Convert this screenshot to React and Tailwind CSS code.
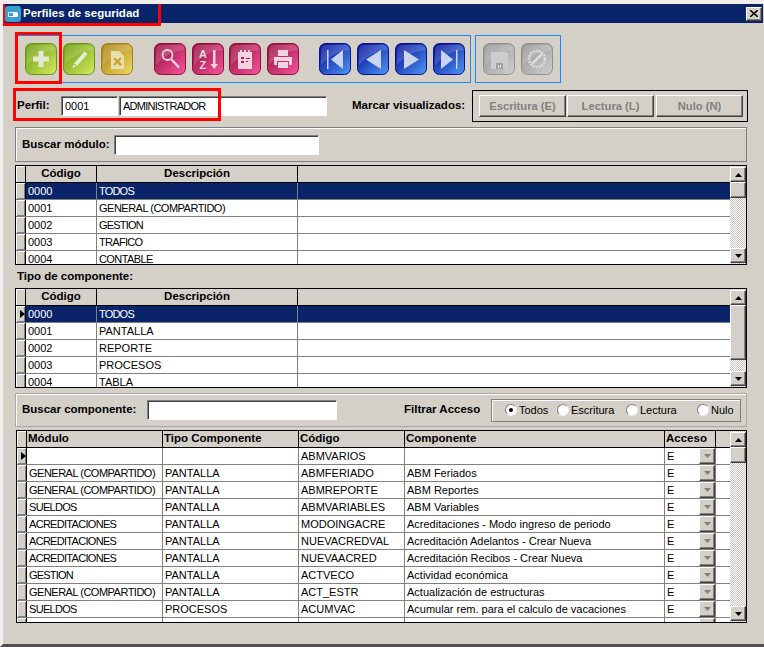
const PAL = {
  green: ['#6fa010', '#d6ec62', '#6c9418'],
  yellow: ['#ad8412', '#f0da66', '#a08020'],
  pink: ['#9c1242', '#f8569f', '#8c1038'],
  blue: ['#08149c', '#5098f6', '#08108c'],
  gray: ['#989898', '#d0d0d0', '#909090'],
};

const GLYPHS = {
  plus: <path d="M13.500 8h5v5.500H24v5h-5.500V24h-5v-5.500H8v-5h5.500z" fill="#e4e8d4" />,
  pencil: <g fill="#e4ecd4"><path d="M11 20.500 21.500 8.500l3 2.500L14 23z" /><path d="M10.500 21.500l2.500 2-4 1.500z" /></g>,
  file: <g><path d="M10 8h8l5 5v13H10z" fill="#e8dfb0" /><path d="M13.500 14.500l3 2.500 3-3 1 2-2.500 2.500 3 3-2 1.500-2.500-3-3 3-1-2 2.500-2.500-2.500-2z" fill="#c8a020" /></g>,
  search: <g fill="none" stroke="#f0d4de"><circle cx="13.500" cy="12" r="5" strokeWidth="1.800" /><path d="M17.500 16.500 25 24.500" strokeWidth="2.500" /></g>,
  sort: <g fill="#f0d4de"><path d="M21 7h2.500v14H26l-3.750 5-3.750-5H21z" /><text x="7" y="15" fontSize="11" fontWeight="700" fontFamily="Liberation Sans, sans-serif">A</text><text x="7.500" y="26" fontSize="11" fontWeight="700" fontFamily="Liberation Sans, sans-serif">Z</text></g>,
  note: <g><path d="M9 9h2V7h2v2h2V7h2v2h2V7h2v2h2v17H9z" fill="#f0d4de" /><path d="M12 14h3v2h-3zm0 4h3v2h-3zm5-3h4v1h-4zm0 3h2v1h-2z" fill="#c01850" /></g>,
  print: <g fill="#f0d4de"><path d="M11 7h10v6H11z" /><path d="M7 14h18v8h-3v-4H10v4H7z" /><path d="M11 19h10v6H11z" /></g>,
  first: <g fill="#c8d4f0"><path d="M8 7h1.500v19H8z" /><path d="M24 7v19L12 16.500z" /></g>,
  prev: <path d="M24 7v19L9 16.500z" fill="#c8d4f0" />,
  next: <path d="M9 7v19l15-9.500z" fill="#c8d4f0" />,
  last: <g fill="#c8d4f0"><path d="M23 7h1.500v19H23z" /><path d="M8 7v19l12-9.500z" /></g>,
  save: <g><path d="M8 9h15l2 2v15H8z" fill="#cccccc" /><path d="M13 20h7v6h-7z" fill="#a0a0a0" /><path d="M15 22h1v3h-1zm2 0h1v3h-1z" fill="#e0e0e0" /></g>,
  cancel: <g fill="none" stroke="#dcdcdc"><circle cx="16" cy="16" r="8" strokeWidth="2.500" strokeDasharray="2 1" /><path d="M11 21 21 11" strokeWidth="2.500" /></g>,
};

function Gloss({ color, glyph }) {
  const [a, b, c] = PAL[color];
  const id = `g-${glyph}`;
  return (
    <svg width="32" height="32" viewBox="0 0 32 32" className="block shrink-0">
      <defs>
        <linearGradient id={id} x1="0.1" y1="0.1" x2="1" y2="1">
          <stop offset="0" stopColor={a} />
          <stop offset="1" stopColor={b} />
        </linearGradient>
      </defs>
      <rect x="0.500" y="0.500" width="31" height="31" rx="6" fill={`url(#${id})`} stroke={c} />
      <path d="M2 7Q2 2 7 2h18q5 0 5 4v1Q14 8 2 22z" fill="#fff" opacity="0.16" />
      {GLYPHS[glyph]}
    </svg>
  );
}

const TRACK = {
  'GENERAL (COMPARTIDO)': 'tracking-[-0.5px]',
  ACREDITACIONES: 'tracking-[-0.7px]',
  GESTION: 'tracking-[-0.8px]',
  SUELDOS: 'tracking-[-0.7px]',
  TODOS: 'tracking-[-0.8px]',
  TRAFICO: 'tracking-[-0.7px]',
  CONTABLE: 'tracking-[-0.6px]',
  ADMINISTRADOR: 'tracking-[-0.75px]',
};

const raised = 'border border-t-white border-l-white border-r-[#404040] border-b-[#404040] bg-[#d4d0c8] shadow-[inset_-1px_-1px_0_#808080]';
const sunken = 'border border-t-[#808080] border-l-[#808080] border-r-white border-b-white bg-white shadow-[inset_1px_1px_0_#404040,1px_1px_0_#d4d0c8]';
const ui = 'font-["Liberation_Sans",sans-serif] text-[11px] leading-none text-black';
const bold = 'font-["Liberation_Sans",sans-serif] text-[11.5px] font-bold leading-none text-black whitespace-nowrap';

function Field({ className, value = '' }) {
  return <input readOnly value={value} className={`${sunken} ${ui} ${TRACK[value] || ''} h-[20px] px-[3px] outline-none ${className}`} />;
}

function Arrow({ up, gray }) {
  return (
    <svg width="7" height="4" viewBox="0 0 7 4" className="block">
      <path d={up ? 'M3.500 0 7 4H0z' : 'M0 0h7L3.500 4z'} fill={gray ? '#808080' : '#000'} />
    </svg>
  );
}

function Scrollbar({ thumb }) {
  return (
    <div className="flex h-full w-[16px] shrink-0 flex-col bg-[repeating-conic-gradient(#ffffff_0_25%,#c8c4bc_0_50%)] bg-[length:2px_2px] pt-[1px]">
      <div className={`${raised} flex h-[15px] w-[16px] shrink-0 items-center justify-center`}><Arrow up /></div>
      <div className={`${raised} w-[16px] shrink-0 ${thumb}`} />
      <div className="flex-1" />
      <div className={`${raised} mb-[1px] flex h-[15px] w-[16px] shrink-0 items-center justify-center`}><Arrow /></div>
    </div>
  );
}

function Grid({ columns, rows, selected, marker, thumb, className }) {
  return (
    <div className={`flex overflow-hidden border border-black bg-[#d4d0c8] ${className}`}>
      <div className="min-w-0 flex-1">
        <div className="flex h-[17px] border-b border-black">
          <div className="w-[10px] shrink-0 border-r border-black shadow-[inset_1px_1px_0_#ffffff]" />
          {columns.map((c) => (
            <div key={c.label} className={`${c.w} flex shrink-0 items-center border-r border-black ${c.center ? 'justify-center' : 'pl-[1px]'} ${bold}`}>{c.label}</div>
          ))}
        </div>
        {rows.map((r, i) => (
          <div key={i} className={`flex h-[17px] border-b border-[#808080] ${i === selected ? 'bg-[#0a246a]' : 'bg-white'}`}>
            <div className="flex w-[10px] shrink-0 items-center justify-end border-r border-black bg-[#d4d0c8] shadow-[inset_1px_1px_0_#ffffff,inset_-1px_-1px_0_#808080]">
              {i === marker && <svg width="5" height="8" viewBox="0 0 5 8"><path d="M0 0l5 4-5 4z" fill="#000" /></svg>}
            </div>
            {columns.map((c, j) => (
              <div key={c.label} className={`${c.w} flex shrink-0 items-center overflow-hidden whitespace-nowrap border-r border-[#808080] ${ui} pl-[2px] ${TRACK[r[j]] || ''} ${i === selected ? 'text-white' : ''} ${c.select ? 'justify-between' : ''}`}>
                <span>{r[j]}</span>
                {c.select && <span className={`${raised} flex h-[16px] w-[16px] items-center justify-center`}><Arrow gray /></span>}
              </div>
            ))}
          </div>
        ))}
      </div>
      <Scrollbar thumb={thumb} />
    </div>
  );
}

function Radio({ checked, label, className }) {
  return (
    <div className={`flex items-center ${className}`}>
      <span className="flex size-[12px] shrink-0 items-center justify-center rounded-full border border-t-[#808080] border-l-[#808080] border-r-[#eeeeee] border-b-[#eeeeee] bg-white">
        {checked && <span className="size-[4px] rounded-full bg-black" />}
      </span>
      <span className={`${ui} ml-[2px]`}>{label}</span>
    </div>
  );
}

function Disabled({ label, className }) {
  return (
    <div className={`${raised} flex h-[22px] items-center justify-center font-["Liberation_Sans",sans-serif] text-[11.2px] font-bold text-[#808080] ${className}`}>{label}</div>
  );
}

const colsA = [
  { label: 'Código', w: 'w-[71px]', center: true },
  { label: 'Descripción', w: 'w-[201px]', center: true },
];
const colsC = [
  { label: 'Módulo', w: 'w-[136px]' },
  { label: 'Tipo Componente', w: 'w-[136px]' },
  { label: 'Código', w: 'w-[106px]' },
  { label: 'Componente', w: 'w-[260px]' },
  { label: 'Acceso', w: 'w-[51px]', select: true },
];
const rowsC = [
  ['', '', 'ABMVARIOS', '', 'E'],
  ['GENERAL (COMPARTIDO)', 'PANTALLA', 'ABMFERIADO', 'ABM Feriados', 'E'],
  ['GENERAL (COMPARTIDO)', 'PANTALLA', 'ABMREPORTE', 'ABM Reportes', 'E'],
  ['SUELDOS', 'PANTALLA', 'ABMVARIABLES', 'ABM Variables', 'E'],
  ['ACREDITACIONES', 'PANTALLA', 'MODOINGACRE', 'Acreditaciones - Modo ingreso de periodo', 'E'],
  ['ACREDITACIONES', 'PANTALLA', 'NUEVACREDVAL', 'Acreditación Adelantos - Crear Nueva', 'E'],
  ['ACREDITACIONES', 'PANTALLA', 'NUEVAACRED', 'Acreditación Recibos - Crear Nueva', 'E'],
  ['GESTION', 'PANTALLA', 'ACTVECO', 'Actividad económica', 'E'],
  ['GENERAL (COMPARTIDO)', 'PANTALLA', 'ACT_ESTR', 'Actualización de estructuras', 'E'],
  ['SUELDOS', 'PROCESOS', 'ACUMVAC', 'Acumular rem. para el calculo de vacaciones', 'E'],
  ['SUELDOS', 'PANTALLA', 'AALTCFOS', 'Adelantos', 'E'],
];

export default function App() {
  return (
    <div className="relative flex h-[647px] w-[764px] flex-col overflow-hidden border-b-[3px] border-l-[3px] border-t-[4px] border-b-[#505050] border-l-[#eeeeee] border-t-[#f0eeea] bg-[#d4d0c8]">
      <div className="mr-[1px] flex h-[19px] shrink-0 items-center bg-[#0a246a] pl-[2px]">
        <svg width="16" height="16" viewBox="0 0 16 16" className="shrink-0">
          <rect width="16" height="16" rx="3" fill="#3a9ed0" />
          <rect x="3" y="6" width="10" height="5" rx="1.500" fill="#fff" />
          <rect x="4" y="7" width="4" height="3" fill="#3a9ed0" />
        </svg>
        <span className={`${bold} ml-[2px] text-white`}>Perfiles de seguridad</span>
        <div className={`${raised} ml-auto mr-[1px] flex h-[14px] w-[16px] items-center justify-center`}>
          <svg width="8" height="7" viewBox="0 0 8 7"><path d="M0 0l8 7M8 0 0 7" stroke="#000" strokeWidth="1.500" /></svg>
        </div>
      </div>

      <div className="flex flex-1 flex-col pl-[12px] pr-[17px]">
        <div className="ml-[2px] mt-[12px] flex h-[48px] shrink-0">
          <div className="flex h-full items-center border border-[#1c8cf0] pl-[7px] pr-[5px]">
            <div className="flex gap-[6px]">
              <Gloss color="green" glyph="plus" />
              <Gloss color="green" glyph="pencil" />
              <Gloss color="yellow" glyph="file" />
            </div>
            <div className="ml-[21px] flex gap-[6px]">
              <Gloss color="pink" glyph="search" />
              <Gloss color="pink" glyph="sort" />
              <div className="-ml-[1px]"><Gloss color="pink" glyph="note" /></div>
              <Gloss color="pink" glyph="print" />
            </div>
            <div className="ml-[20px] flex gap-[6px]">
              <Gloss color="blue" glyph="first" />
              <Gloss color="blue" glyph="prev" />
              <Gloss color="blue" glyph="next" />
              <Gloss color="blue" glyph="last" />
            </div>
          </div>
          <div className="ml-[4px] flex h-full items-center gap-[6px] border border-[#1c8cf0] px-[7px]">
            <Gloss color="gray" glyph="save" />
            <Gloss color="gray" glyph="cancel" />
          </div>
        </div>

        <div className="mt-[7px] flex h-[32px] shrink-0 items-center">
          <span className={`${bold} ml-[2px] w-[44px]`}>Perfil:</span>
          <Field className="w-[57px]" value="0001" />
          <Field className="ml-[1px] w-[208px]" value="ADMINISTRADOR" />
          <span className={`${bold} ml-[25px] w-[120px]`}>Marcar visualizados:</span>
          <div className="-mr-[1px] flex h-full flex-1 items-center gap-[1px] border border-black pl-[6px]">
            <Disabled label="Escritura (E)" className="w-[87px]" />
            <Disabled label="Lectura (L)" className="w-[87px]" />
            <Disabled label="Nulo (N)" className="ml-[1px] w-[87px]" />
          </div>
        </div>

        <div className="mt-[5px] flex h-[35px] shrink-0 items-center border border-[#808080] shadow-[inset_1px_1px_0_#ffffff] pl-[6px]">
          <span className={`${bold} w-[92px]`}>Buscar módulo:</span>
          <Field className="w-[205px]" />
        </div>

        <Grid
          className="mt-[3px] h-[100px] shrink-0"
          columns={colsA}
          selected={0}
          thumb="h-[16px]"
          rows={[['0000', 'TODOS'], ['0001', 'GENERAL (COMPARTIDO)'], ['0002', 'GESTION'], ['0003', 'TRAFICO'], ['0004', 'CONTABLE']]}
        />

        <div className={`${bold} flex h-[23px] shrink-0 items-center pl-[2px]`}>Tipo de componente:</div>

        <Grid
          className="h-[100px] shrink-0"
          columns={colsA}
          selected={0}
          marker={0}
          thumb="h-[55px]"
          rows={[['0000', 'TODOS'], ['0001', 'PANTALLA'], ['0002', 'REPORTE'], ['0003', 'PROCESOS'], ['0004', 'TABLA']]}
        />

        <div className="mt-[5px] flex h-[34px] shrink-0 items-center border border-[#a8a8a8] shadow-[inset_1px_1px_0_#ffffff] pl-[6px]">
          <span className={`${bold} w-[125px]`}>Buscar componente:</span>
          <Field className="w-[190px]" />
          <span className={`${bold} ml-[67px] w-[87px]`}>Filtrar Acceso</span>
          <div className="flex h-[23px] w-[250px] items-center border border-[#808080] shadow-[inset_1px_1px_0_#ffffff] pl-[13px]">
            <Radio checked label="Todos" className="w-[52px]" />
            <Radio label="Escritura" className="w-[69px]" />
            <Radio label="Lectura" className="w-[71px]" />
            <Radio label="Nulo" />
          </div>
        </div>

        <Grid
          className="ml-[1px] mt-[3px] h-[193px] shrink-0"
          columns={colsC}
          marker={0}
          selected={-1}
          thumb="h-[16px]"
          rows={rowsC}
        />
      </div>

      <div className="pointer-events-none absolute -left-[1px] -top-[4px] h-[26px] w-[159px] border-[3px] border-[#ff0000]" />
      <div className="pointer-events-none absolute left-[12px] top-[28px] h-[52px] w-[47px] border-[3px] border-[#ff0000]" />
      <div className="pointer-events-none absolute left-[10px] top-[84px] h-[33px] w-[208px] border-[3px] border-[#ff0000]" />
    </div>
  );
}
